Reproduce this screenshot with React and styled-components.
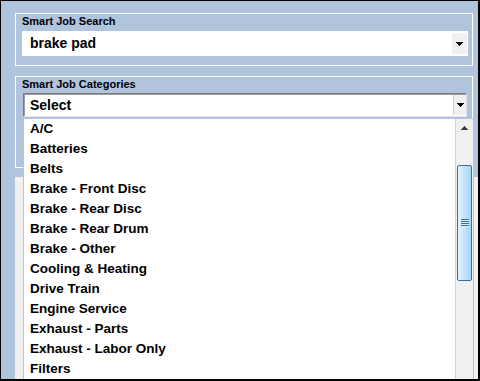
import styled, { createGlobalStyle } from 'styled-components'

const GlobalStyle = createGlobalStyle`
  body {
    margin: 0;
    font-family: "Liberation Sans", Arial, sans-serif;
    color: #000;
  }
`

const categories = [
  'A/C',
  'Batteries',
  'Belts',
  'Brake - Front Disc',
  'Brake - Rear Disc',
  'Brake - Rear Drum',
  'Brake - Other',
  'Cooling & Heating',
  'Drive Train',
  'Engine Service',
  'Exhaust - Parts',
  'Exhaust - Labor Only',
  'Filters',
]

const Frame = styled.div`
  width: 480px;
  height: 381px;
  box-sizing: border-box;
  border-style: solid;
  border-color: #000;
  border-width: 1px 2px 2px 1px;
  background: #b0c4de;
  padding: 12px 0 0 14px;
  display: flex;
  flex-direction: column;
  overflow: hidden;
`

const GroupBox = styled.div`
  width: 458px;
  height: ${(p) => p.$height}px;
  margin-top: ${(p) => p.$top || 0}px;
  box-sizing: border-box;
  border: 1px solid #fff;
  padding: 1px 4px 0 6px;
  flex-shrink: 0;
`

const GroupLabel = styled.div`
  font-size: 11px;
  font-weight: 700;
  line-height: 13px;
  height: 13px;
`

const SearchCombo = styled.div`
  margin-top: 3px;
  width: 446px;
  height: 25px;
  background: #fff;
  display: flex;
  align-items: center;
  justify-content: space-between;
  padding-left: 8px;
  box-sizing: border-box;
  font-size: 14px;
  font-weight: 700;
  line-height: 25px;
`

const DropButton = styled.div`
  width: ${(p) => (p.$inset ? 13 : 15)}px;
  height: ${(p) => (p.$inset ? 20 : 21)}px;
  margin-right: ${(p) => (p.$inset ? 0 : 1)}px;
  background: #f0f0f0;
  border-left: ${(p) => (p.$inset ? '1px solid #d4d4d4' : 'none')};
  display: flex;
  align-items: center;
  justify-content: center;
  box-sizing: border-box;
`

const CategoryWrap = styled.div`
  position: relative;
  z-index: 2;
  width: 444px;
  margin: 2px 0 0 1px;
`

const CategoryCombo = styled.div`
  height: 24px;
  box-sizing: border-box;
  border: 1px solid;
  border-color: #7a7a7a #e3e3e3 #e3e3e3 #7a7a7a;
  box-shadow: inset 1px 1px 0 #a0a0a0;
  background: #fff;
  display: flex;
  align-items: center;
  justify-content: space-between;
  padding-left: 6px;
  font-size: 14px;
  font-weight: 700;
  line-height: 22px;
`

const DropList = styled.div`
  position: absolute;
  top: calc(100% + 1px);
  left: 0;
  width: 451px;
  height: 300px;
  box-sizing: border-box;
  border: 1px solid #b3c5dc;
  background: #fff;
  display: flex;
`

const Items = styled.div`
  flex: 1;
`

const Item = styled.div`
  height: 20px;
  line-height: 20px;
  padding-left: 6px;
  font-size: 13.5px;
  font-weight: 700;
  white-space: nowrap;
`

const ScrollBar = styled.div`
  width: 18px;
  box-sizing: border-box;
  border-left: 1px solid #c5d5ea;
  background: #f0f0f0;
  display: flex;
  flex-direction: column;
`

const ScrollArrow = styled.div`
  height: 17px;
  display: flex;
  align-items: center;
  justify-content: center;
`

const Thumb = styled.div`
  margin: 29px 0 0 1px;
  width: 15px;
  height: 116px;
  box-sizing: border-box;
  border: 1px solid #3c6e97;
  border-radius: 2px;
  background: linear-gradient(to right, #e6f5fd 0%, #c4e6fa 45%, #a3d6f6 100%);
  display: flex;
  align-items: center;
  justify-content: center;
`

const Grip = styled.div`
  width: 8px;
  height: 8px;
  background: repeating-linear-gradient(
    to bottom,
    #3d6d94 0px,
    #3d6d94 1px,
    #d8effc 1px,
    #d8effc 2px
  );
`

const LowerPanel = styled.div`
  flex: 1;
  margin-top: 9px;
  background: #f0f0f0;
`

const Arrow = ({ up, color = '#000' }) => (
  <svg width="7" height="4" viewBox="0 0 7 4" shapeRendering="crispEdges">
    <polygon
      points={up ? '3,0 4,0 7,4 0,4' : '0,0 7,0 4,4 3,4'}
      fill={color}
    />
  </svg>
)

const App = () => {
  return (
    <Frame>
      <GlobalStyle />
      <GroupBox $height={53}>
        <GroupLabel>Smart Job Search</GroupLabel>
        <SearchCombo>
          brake pad
          <DropButton>
            <Arrow />
          </DropButton>
        </SearchCombo>
      </GroupBox>
      <GroupBox $height={92} $top={10}>
        <GroupLabel>Smart Job Categories</GroupLabel>
        <CategoryWrap>
          <CategoryCombo>
            Select
            <DropButton $inset>
              <Arrow />
            </DropButton>
          </CategoryCombo>
          <DropList>
            <Items>
              {categories.map((c) => (
                <Item key={c}>{c}</Item>
              ))}
            </Items>
            <ScrollBar>
              <ScrollArrow>
                <Arrow up color="#404040" />
              </ScrollArrow>
              <Thumb>
                <Grip />
              </Thumb>
            </ScrollBar>
          </DropList>
        </CategoryWrap>
      </GroupBox>
      <LowerPanel />
    </Frame>
  )
}

export default App
